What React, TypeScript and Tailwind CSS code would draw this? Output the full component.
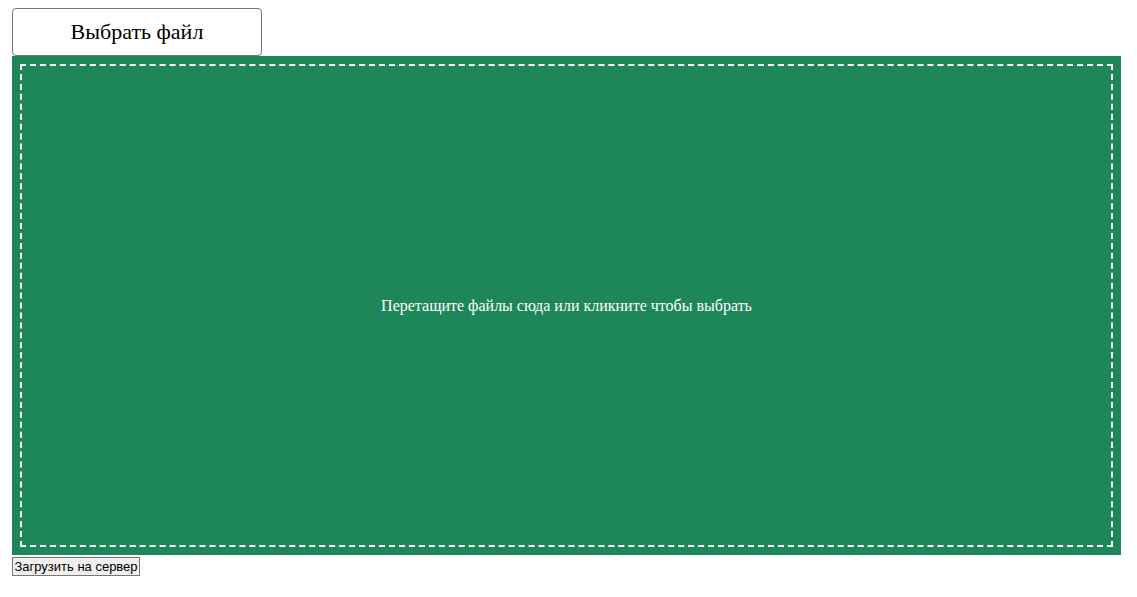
import React from "react";

export default function App() {
  return (
    <div className="pt-2 pl-3 pr-4 bg-white min-h-[597px]" style={{ fontFamily: '"Liberation Serif", "Times New Roman", serif' }}>
      <button className="w-[250px] h-[48px] bg-white border border-[#767676] rounded-[4px] text-[22px] text-black leading-none flex items-center justify-center" style={{ fontFamily: '"Liberation Serif", "Times New Roman", serif' }}>
        Выбрать файл
      </button>
      <div className="w-[1109px] h-[499px] bg-[#1e8759] p-2">
        <div className="w-full h-full border-2 border-dashed border-white flex items-center justify-center">
          <span className="text-white text-[16px]">Перетащите файлы сюда или кликните чтобы выбрать</span>
        </div>
      </div>
      <button className="mt-[2px] h-[19px] w-[128px] bg-[#efefef] border border-[#767676] text-[13px] text-black leading-none flex items-center justify-center whitespace-nowrap" style={{ fontFamily: '"Liberation Sans", Arial, sans-serif' }}>
        Загрузить на сервер
      </button>
    </div>
  );
}
